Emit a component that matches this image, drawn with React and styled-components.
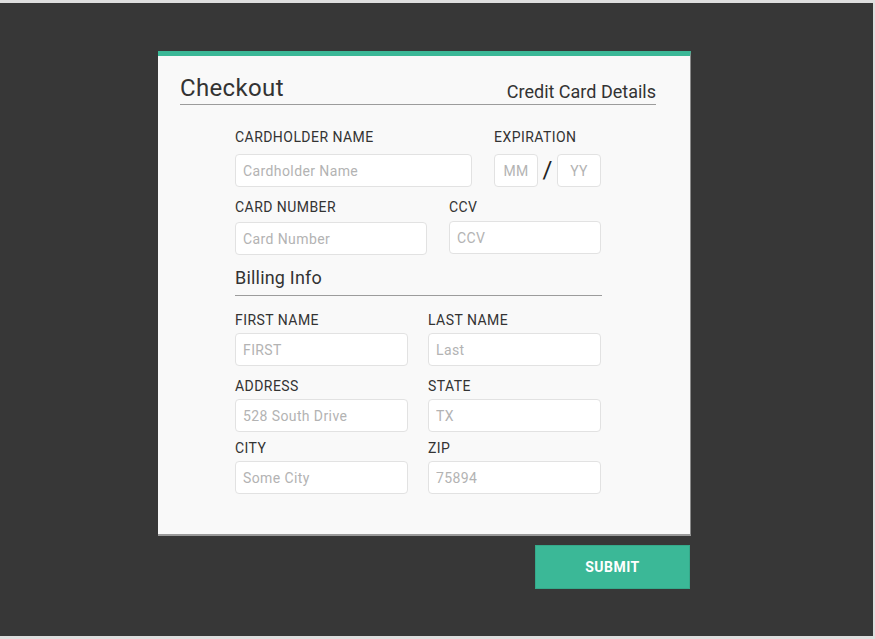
import React from "react";
import styled, { createGlobalStyle } from "styled-components";

const GlobalStyle = createGlobalStyle`
    html, body {
        margin: 0;
        padding: 0;
        background: #dedede;
        font-family: Roboto, "Liberation Sans", sans-serif;
    }
    * { box-sizing: border-box; }
`;

const Stage = styled.div`
    margin: 3px 2px 3px 0;
    height: 633px;
    background: #373737;
    padding: 48px 0 0 158px;
`;

const Card = styled.div`
    width: 533px;
    background: #f9f9f9;
    border-top: 5px solid #3bb897;
    border-right: 1px solid #8a8a8a;
    border-bottom: 2px solid #9a9a9a;
    padding: 18px 34px 40px 22px;
`;

const Header = styled.div`
    display: flex;
    justify-content: space-between;
    align-items: flex-end;
    padding-bottom: 2px;
    border-bottom: 1px solid #9c9c9c;
`;

const Title = styled.h1`
    margin: 0;
    font-size: 24px;
    font-weight: 400;
    line-height: 28px;
    letter-spacing: 0.35px;
    color: #333;
`;

const SubTitle = styled.h2`
    margin: 0;
    font-size: 18px;
    font-weight: 400;
    line-height: 21px;
    color: #333;
`;

const Form = styled.form`
    width: 367px;
    margin-left: 55px;
`;

const Row = styled.div`
    display: flex;
    gap: ${props => props.gap}px;
    margin-top: ${props => props.top}px;
`;

const Field = styled.div`
    display: flex;
    flex-direction: column;
    width: ${props => props.w}px;
`;

const Label = styled.label`
    display: block;
    font-size: 14px;
    line-height: 16px;
    letter-spacing: 0.45px;
    color: #333;
    margin-bottom: ${props => props.mb}px;
`;

const Input = styled.input`
    width: ${props => (props.w ? `${props.w}px` : "100%")};
    height: 33px;
    border: 1px solid #e2e2e2;
    border-radius: 4px;
    background: #fff;
    padding: 0 7px;
    font-family: Roboto, "Liberation Sans", sans-serif;
    font-size: 14px;
    letter-spacing: 0.4px;
    color: #333;
    text-align: ${props => (props.center ? "center" : "left")};
    outline: none;

    &::placeholder {
        color: #b3b3b3;
    }
`;

const Expiry = styled.div`
    display: flex;
    align-items: center;
`;

const Slash = styled.span`
    width: 19px;
    text-align: center;
    font-size: 24px;
    line-height: 33px;
    color: #222;
`;

const Section = styled.h3`
    margin: 12px 0 0;
    font-size: 18px;
    font-weight: 400;
    line-height: 21px;
    letter-spacing: 0.2px;
    color: #333;
    padding-bottom: 7px;
    border-bottom: 1px solid #9c9c9c;
`;

const Actions = styled.div`
    width: 533px;
    display: flex;
    justify-content: flex-end;
    padding-right: 1px;
    margin-top: 9px;
`;

const Submit = styled.button`
    width: 155px;
    height: 44px;
    background: #3bb897;
    border: 1px solid #35a98a;
    color: #fff;
    font-family: Roboto, "Liberation Sans", sans-serif;
    font-weight: 700;
    font-size: 14px;
    letter-spacing: 0.5px;
    cursor: pointer;
`;

const TextField = ({ label, placeholder, w, mb }) => (
    <Field w={w}>
        <Label mb={mb}>{label}</Label>
        <Input placeholder={placeholder} />
    </Field>
);

const App = () => {
    return (
        <>
            <GlobalStyle />
            <Stage>
                <Card>
                    <Header>
                        <Title>Checkout</Title>
                        <SubTitle>Credit Card Details</SubTitle>
                    </Header>
                    <Form onSubmit={e => e.preventDefault()}>
                        <Row top={24} gap={22}>
                            <TextField label="CARDHOLDER NAME" placeholder="Cardholder Name" w={237} mb={9} />
                            <Field w={107}>
                                <Label mb={9}>EXPIRATION</Label>
                                <Expiry>
                                    <Input w={44} center placeholder="MM" />
                                    <Slash>/</Slash>
                                    <Input w={44} center placeholder="YY" />
                                </Expiry>
                            </Field>
                        </Row>
                        <Row top={12} gap={22}>
                            <TextField label="CARD NUMBER" placeholder="Card Number" w={192} mb={7} />
                            <TextField label="CCV" placeholder="CCV" w={152} mb={6} />
                        </Row>
                        <Section>Billing Info</Section>
                        <Row top={16} gap={20}>
                            <TextField label="FIRST NAME" placeholder="FIRST" w={173} mb={5} />
                            <TextField label="LAST NAME" placeholder="Last" w={173} mb={5} />
                        </Row>
                        <Row top={12} gap={20}>
                            <TextField label="ADDRESS" placeholder="528 South Drive" w={173} mb={5} />
                            <TextField label="STATE" placeholder="TX" w={173} mb={5} />
                        </Row>
                        <Row top={8} gap={20}>
                            <TextField label="CITY" placeholder="Some City" w={173} mb={5} />
                            <TextField label="ZIP" placeholder="75894" w={173} mb={5} />
                        </Row>
                    </Form>
                </Card>
                <Actions>
                    <Submit type="button">SUBMIT</Submit>
                </Actions>
            </Stage>
        </>
    );
};

export default App;
